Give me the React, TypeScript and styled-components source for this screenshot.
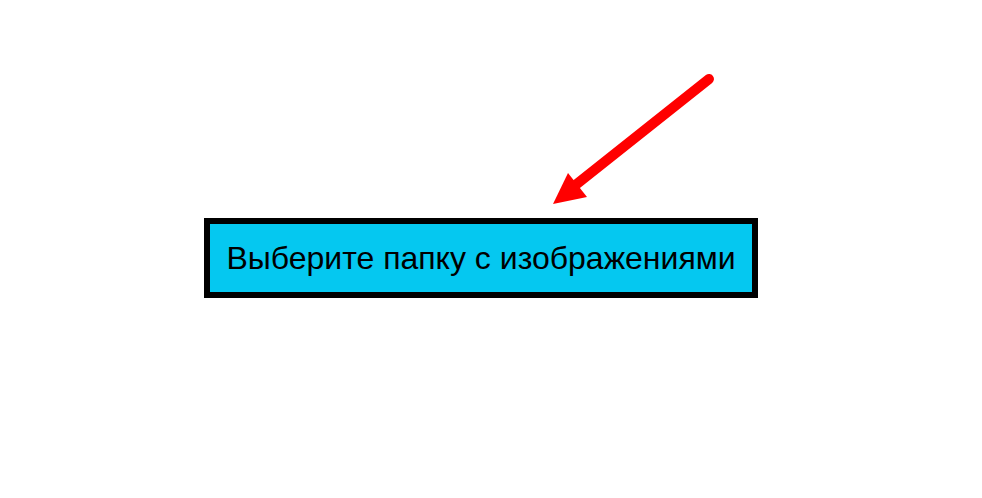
import React from "react";
import styled, { createGlobalStyle } from "styled-components";

const Global = createGlobalStyle`
  html, body { margin: 0; padding: 0; background: #ffffff; }
  body { font-family: "Liberation Sans", Arial, sans-serif; }
`;

const Page = styled.div`
  width: 982px;
  height: 498px;
  display: flex;
  flex-direction: column;
  align-items: flex-start;
  padding-left: 204px;
  box-sizing: border-box;
`;

const Pointer = styled.svg`
  display: block;
  width: 554px;
  height: 218px;
`;

const FolderButton = styled.button`
  box-sizing: border-box;
  width: 554px;
  height: 80px;
  border: 6px solid #000000;
  background: #05c8f0;
  color: #000000;
  font-family: "Liberation Sans", Arial, sans-serif;
  font-size: 32px;
  padding: 0;
  margin: 0;
  display: flex;
  align-items: center;
  justify-content: center;
  cursor: pointer;
`;

export default function App() {
  return (
    <>
      <Global />
      <Page>
        <Pointer viewBox="204 0 554 218">
          <line x1="709" y1="79" x2="573" y2="187" stroke="#ff0000" strokeWidth="10" strokeLinecap="round" />
          <polygon points="553,204 568,173 587,197" fill="#ff0000" />
        </Pointer>
        <FolderButton>Выберите папку с изображениями</FolderButton>
      </Page>
    </>
  );
}
